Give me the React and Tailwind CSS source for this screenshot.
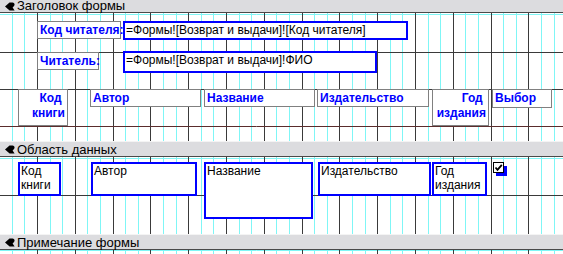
const font = "font-['Liberation_Sans',Arial,sans-serif]";

// vertical grid: every 1/3 cm cyan, every cm dark
const cols = [];
for (let k = 1; 12.6 * k - 0.8 < 563; k++) {
  cols.push({ x: Math.round(12.6 * k - 0.8) + 0.5, dark: k % 3 === 0 });
}

function Grid({ h, rows = [], cyanTop = 0.5 }) {
  return (
    <svg className="absolute inset-0" width="563" height={h}>
      <line x1="0" x2="563" y1={cyanTop} y2={cyanTop} stroke="#7ff6f6" />
      {cols.filter(c => !c.dark).map(c => (
        <line key={c.x} x1={c.x} x2={c.x} y1="0" y2={h} stroke="#7ff6f6" />
      ))}
      {cols.filter(c => c.dark).map(c => (
        <line key={c.x} x1={c.x} x2={c.x} y1="0" y2={h} stroke="#3a3a3a" />
      ))}
      {rows.map(r => (
        <line key={r.y} x1="0" x2="563" y1={r.y} y2={r.y} stroke={r.c || '#3a3a3a'} />
      ))}
    </svg>
  );
}

function Arrow() {
  return (
    <svg width="10" height="9" viewBox="0 0 10 9" className="shrink-0">
      <path d="M0 4.5 L4.5 0.5 H7.5 C9.8 0.5 10.2 3.3 8.6 4.6 L7.6 5.4 L9.6 8.5 H4.6 Z" fill="#000" />
    </svg>
  );
}

function Bar({ title, className = '' }) {
  return (
    <div className={`flex items-center gap-[2px] pl-[5px] bg-[#dcdcdf] text-[13px] leading-[12px] text-black shrink-0 ${className}`}>
      <Arrow />
      <span>{title}</span>
    </div>
  );
}

const Lbl = ({ className = '', children }) => (
  <div className={`absolute bg-white border border-[#808080] px-[2px] pt-[1px] font-bold text-[#0000ff] text-[12px] leading-[15px] whitespace-nowrap ${className}`}>
    {children}
  </div>
);

const Box = ({ className = '', children }) => (
  <div className={`absolute bg-white border-2 border-[#0000ff] pl-[1px] text-black text-[12px] leading-[14px] whitespace-nowrap overflow-hidden ${className}`}>
    {children}
  </div>
);

export default function App() {
  return (
    <div className={`w-[563px] h-[254px] overflow-hidden flex flex-col bg-white ${font}`}>
      <Bar title="Заголовок формы" className="h-[13px] border-b border-[#4a4a4a]" />

      {/* form header: free design canvas */}
      <div className="relative h-[128px] shrink-0">
        <Grid h={128} rows={[{ y: 39.5 }, { y: 76.5 }, { y: 113.5, c: '#5a2c2c' }]} cyanTop={1.5} />

        <Lbl className="left-[37px] top-[8px] w-[84px] h-[18px]">Код читателя:</Lbl>
        <Box className="left-[123px] top-[8px] w-[285px] h-[19px]">=Формы![Возврат и выдачи]![Код читателя]</Box>
        <Lbl className="left-[37px] top-[39px] w-[62px] h-[18px]">Читатель:</Lbl>
        <Box className="left-[123px] top-[38px] w-[254px] h-[22px]">=Формы![Возврат и выдачи]!ФИО</Box>

        <Lbl className="left-[18px] top-[76px] w-[50px] h-[37px] text-right">Код&nbsp;<br />книги</Lbl>
        <Lbl className="left-[90px] top-[76px] w-[111px] h-[18px]">Автор</Lbl>
        <Lbl className="left-[204px] top-[76px] w-[111px] h-[18px]">Название</Lbl>
        <Lbl className="left-[317px] top-[76px] w-[112px] h-[18px]">Издательство</Lbl>
        <Lbl className="left-[432px] top-[76px] w-[57px] h-[37px] text-right">Год&nbsp;<br />издания</Lbl>
        <Lbl className="left-[492px] top-[76px] w-[60px] h-[19px]">Выбор</Lbl>
      </div>

      <Bar title="Область данных" className="h-[16px] pt-[1px] border-t border-[#f4f4f4] border-b border-b-[#4a4a4a]" />

      {/* detail: free design canvas */}
      <div className="relative h-[77px] shrink-0">
        <Grid h={77} rows={[{ y: 38.5 }]} cyanTop={1.5} />

        <Box className="left-[18px] top-[5px] w-[43px] h-[34px]">Код<br />книги</Box>
        <Box className="left-[91px] top-[5px] w-[106px] h-[34px]">Автор</Box>
        <Box className="left-[204px] top-[5px] w-[109px] h-[57px]">Название</Box>
        <Box className="left-[318px] top-[5px] w-[113px] h-[34px]">Издательство</Box>
        <Box className="left-[432px] top-[5px] w-[55px] h-[34px]">Год<br />издания</Box>

        <div className="absolute left-[493px] top-[5px] w-[14px] h-[14px]">
          <div className="absolute left-[3px] top-[4px] w-[11px] h-[10px] bg-[#0000ff]" />
          <div className="absolute left-0 top-0 w-[11px] h-[11px] bg-white border border-black flex items-center justify-center">
            <svg width="9" height="9" viewBox="0 0 9 9">
              <path d="M1.5 4.5 L3.5 6.8 L7.8 1.8" fill="none" stroke="#000" strokeWidth="1.8" />
            </svg>
          </div>
        </div>
      </div>

      <Bar title="Примечание формы" className="h-[16px] pt-[1px] border-t border-[#f4f4f4] border-b border-b-[#4a4a4a]" />

      <div className="relative flex-1">
        <Grid h={10} />
      </div>
    </div>
  );
}
